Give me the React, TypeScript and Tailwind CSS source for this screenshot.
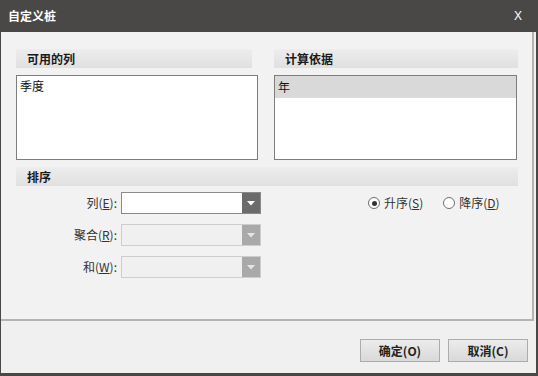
import { FC } from 'react';

const font = { fontFamily: '"Noto Sans CJK SC", "Noto Sans", sans-serif' };

const SectionHeader: FC<{ title: string; className?: string }> = ({ title, className }) => (
  <div
    className={`h-[19px] flex items-center pl-[11px] text-[12px] font-bold text-[#1a1a1a] bg-gradient-to-b from-[#ededed] to-[#e0e0e0] ${className ?? ''}`}
  >
    {title}
  </div>
);

const Combo: FC<{ label: React.ReactNode; disabled?: boolean }> = ({ label, disabled }) => (
  <div className="flex items-center h-[22px]">
    <div className="w-[105px] text-right text-[12px] text-[#333] pr-[4px]">{label}</div>
    <div
      className={`w-[140px] h-[22px] flex border ${
        disabled ? 'border-[#cdcdcd] bg-[#f0f0f0]' : 'border-[#8a8a8a] bg-white'
      }`}
    >
      <div className="flex-1" />
      <div
        className={`w-[18px] h-full flex items-center justify-center ${
          disabled ? 'bg-[#a9a9a9]' : 'bg-[#6b6b6b]'
        }`}
      >
        <svg width="8" height="5" viewBox="0 0 8 5">
          <path d="M0 0 L8 0 L4 4.5 Z" fill={disabled ? '#e6e6e6' : '#ffffff'} />
        </svg>
      </div>
    </div>
  </div>
);

const Radio: FC<{ checked?: boolean; children: React.ReactNode }> = ({ checked, children }) => (
  <div className="flex items-center gap-[4px] text-[12px] text-[#333]">
    <div className="w-[12px] h-[12px] rounded-full border border-[#6f6f6f] bg-white flex items-center justify-center">
      {checked && <div className="w-[5px] h-[5px] rounded-full bg-[#333]" />}
    </div>
    <span>{children}</span>
  </div>
);

const Button: FC<{ children: React.ReactNode }> = ({ children }) => (
  <button className="w-[80px] h-[23px] border border-[#acacac] bg-gradient-to-b from-[#ececec] to-[#d9d9d9] text-[12px] font-bold text-[#222] flex items-center justify-center">
    {children}
  </button>
);

export default function App() {
  return (
    <div className="w-[538px] h-[376px] bg-[#4a4846] flex flex-col overflow-hidden" style={font}>
      <div className="h-[32px] flex items-center justify-between pl-[8px] pr-[16px] text-white">
        <span className="text-[12px] font-bold">自定义桩</span>
        <span className="text-[12px]" style={{ fontFamily: '"Liberation Sans", sans-serif' }}>X</span>
      </div>
      <div className="flex-1 ml-[1px] mr-[2px] mb-[3px] bg-[#f0f0f0] flex flex-col">
        <div className="h-[289px] mr-[2px] bg-[#f2f2f2] border-r-2 border-b-2 border-[#b4b4b4] pt-[17px] pl-[15px] pr-[14px]">
          <div className="flex gap-[16px]">
            <div className="w-[242px] flex flex-col">
              <SectionHeader title="可用的列" className="w-[236px]" />
              <div className="mt-[7px] h-[85px] border border-[#7d7d7d] bg-white">
                <div className="px-[3px] pt-[1px] text-[12px] text-[#111]">季度</div>
              </div>
            </div>
            <div className="w-[244px] flex flex-col">
              <SectionHeader title="计算依据" />
              <div className="mt-[7px] h-[85px] w-[243px] border border-[#7d7d7d] bg-white">
                <div className="h-[22px] bg-[#d9d9d9] px-[3px] flex items-center text-[12px] text-[#111]">年</div>
              </div>
            </div>
          </div>
          <SectionHeader title="排序" className="mt-[7px] w-[502px]" />
          <div className="flex mt-[6px]">
            <div className="flex flex-col gap-[10px]">
              <Combo label={<>列(<u>E</u>):</>} />
              <Combo label={<>聚合(<u>R</u>):</>} disabled />
              <Combo label={<>和(<u>W</u>):</>} disabled />
            </div>
            <div className="flex items-center gap-[20px] h-[22px] ml-[107px]">
              <Radio checked>升序(<u>S</u>)</Radio>
              <Radio>降序(<u>D</u>)</Radio>
            </div>
          </div>
        </div>
        <div className="flex-1 flex justify-end items-start pt-[18px] pr-[8px] gap-[8px]">
          <Button>确定(O)</Button>
          <Button>取消(C)</Button>
        </div>
      </div>
    </div>
  );
}
